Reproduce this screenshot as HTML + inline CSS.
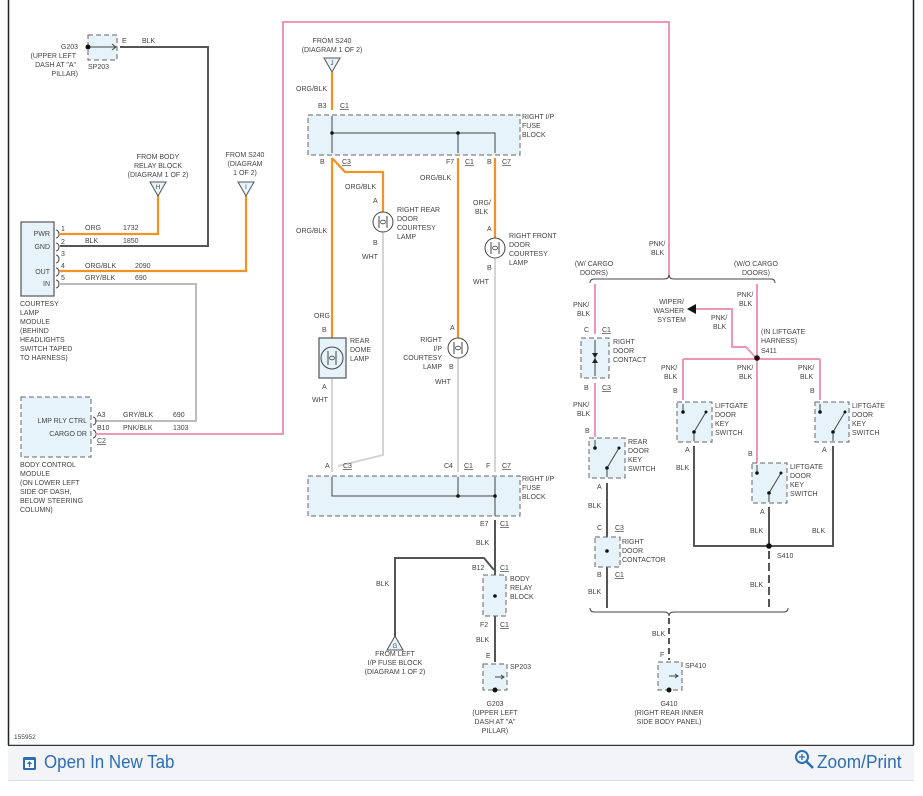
<!DOCTYPE html>
<html><head><meta charset="utf-8">
<style>
html,body{margin:0;padding:0;background:#fff;width:923px;height:796px;overflow:hidden}
#wrap{position:absolute;left:0;top:0;width:923px;height:796px}
svg{position:absolute;left:0;top:0}
text{font-family:"Liberation Sans",sans-serif;font-size:7px;fill:#444}
.m{text-anchor:middle}.r{text-anchor:end}
.box{fill:#e6f3fa;stroke:#666;stroke-width:1;stroke-dasharray:5 3}
.sbox{fill:#e6f3fa;stroke:#555;stroke-width:1.2}
.org{stroke:#f39224;stroke-width:2.2;fill:none}
.blk{stroke:#555;stroke-width:2;fill:none}
.gry{stroke:#bbb;stroke-width:2;fill:none}
.wht{stroke:#d4d4d4;stroke-width:2;fill:none}
.pnk{stroke:#ec98b4;stroke-width:2;fill:none}
.thin{stroke:#444;stroke-width:1;fill:none}
.dot{fill:#111}
.ftr{position:absolute;left:8px;top:746px;width:906px;height:34px;background:#f2f4f8;border-bottom:1px solid #dde}
.ftr span{position:absolute;top:6px;font-family:"Liberation Sans Narrow","Liberation Sans",sans-serif;font-size:18px;color:#2d6db5;transform-origin:0 0;white-space:nowrap}
</style></head><body><div id="wrap">
<svg width="923" height="796" viewBox="0 0 923 796">
<line x1="8.5" y1="0" x2="8.5" y2="745" stroke="#222" stroke-width="1.5"/>
<line x1="913.5" y1="0" x2="913.5" y2="745" stroke="#222" stroke-width="1.5"/>
<line x1="8" y1="745.5" x2="914" y2="745.5" stroke="#333" stroke-width="1.5"/>

<rect class="box" x="88" y="35" width="29" height="25"/>
<line class="thin" x1="88" y1="47" x2="116" y2="47"/><path class="thin" d="M112 44 L116 47 L112 50"/>
<circle class="dot" cx="88" cy="47" r="2.5"/>
<text x="122" y="43">E</text><text x="142" y="43">BLK</text>
<text class="r" x="78" y="49">G203</text>
<text class="r" x="76" y="58">(UPPER LEFT</text>
<text class="r" x="76" y="67">DASH AT "A"</text>
<text class="r" x="78" y="76">PILLAR)</text>
<text x="88" y="69">SP203</text>
<path class="blk" d="M120 47 H208 V246 H60"/>

<rect class="sbox" x="21" y="222" width="33" height="74"/>
<text class="r" x="50" y="236">PWR</text><text class="r" x="50" y="249">GND</text>
<text class="r" x="50" y="274">OUT</text><text class="r" x="50" y="286">IN</text>
<g class="thin"><path d="M56 230 a3 4 0 0 1 0 8"/><path d="M56 243 a3 4 0 0 1 0 8"/><path d="M56 255 a3 4 0 0 1 0 8"/><path d="M56 268 a3 4 0 0 1 0 8"/><path d="M56 280 a3 4 0 0 1 0 8"/></g>
<text x="61" y="231">1</text><text x="61" y="244">2</text><text x="61" y="256">3</text><text x="61" y="268">4</text><text x="61" y="280">5</text>
<path class="org" d="M59 234 H158 V195"/>
<text x="85" y="230">ORG</text><text x="123" y="230">1732</text>
<text x="85" y="243">BLK</text><text x="123" y="243">1850</text>
<polygon points="150,182 166,182 158,196" fill="#e6f3fa" stroke="#555"/><text class="m" x="158" y="189" style="font-size:6px">H</text>
<text class="m" x="158" y="159">FROM BODY</text><text class="m" x="158" y="168">RELAY BLOCK</text><text class="m" x="158" y="177">(DIAGRAM 1 OF 2)</text>
<path class="org" d="M59 271 H246 V196"/>
<polygon points="238,182 254,182 246,196" fill="#e6f3fa" stroke="#555"/><text class="m" x="246" y="189" style="font-size:6px">I</text>
<text class="m" x="245" y="157">FROM S240</text><text class="m" x="245" y="166">(DIAGRAM</text><text class="m" x="245" y="175">1 OF 2)</text>
<text x="85" y="268">ORG/BLK</text><text x="135" y="268">2090</text>
<path class="gry" d="M59 284 H196 V421 H95"/>
<text x="85" y="280">GRY/BLK</text><text x="135" y="280">690</text>
<text x="20" y="306">COURTESY</text><text x="20" y="315">LAMP</text><text x="20" y="324">MODULE</text><text x="20" y="333">(BEHIND</text><text x="20" y="342">HEADLIGHTS</text><text x="20" y="351">SWITCH TAPED</text><text x="20" y="360">TO HARNESS)</text>

<rect class="box" x="21" y="397" width="70" height="60"/>
<text class="r" x="87" y="423">LMP RLY CTRL</text><text class="r" x="87" y="436">CARGO DR</text>
<g class="thin"><path d="M93 417 a3 4 0 0 1 0 8"/><path d="M93 430 a3 4 0 0 1 0 8"/></g>
<text x="97" y="417">A3</text><text x="97" y="430">B10</text><text x="97" y="443" text-decoration="underline">C2</text>
<text x="123" y="417">GRY/BLK</text><text x="173" y="417">690</text>
<text x="123" y="430">PNK/BLK</text><text x="173" y="430">1303</text>
<path class="pnk" d="M95 434 H283 V22 H669 V278"/>
<text x="20" y="467">BODY CONTROL</text><text x="20" y="476">MODULE</text><text x="20" y="485">(ON LOWER LEFT</text><text x="20" y="494">SIDE OF DASH,</text><text x="20" y="503">BELOW STEERING</text><text x="20" y="512">COLUMN)</text>
<text x="14" y="739" style="font-size:6.5px">155952</text>

<text class="m" x="332" y="43">FROM S240</text><text class="m" x="332" y="52">(DIAGRAM 1 OF 2)</text>
<polygon points="324,58 340,58 332,72" fill="#e6f3fa" stroke="#555"/><text class="m" x="332" y="65" style="font-size:6px">J</text>
<text x="296" y="91">ORG/BLK</text>
<path class="org" d="M332 72 V110"/>
<text x="318" y="108">B3</text><text x="340" y="108" text-decoration="underline">C1</text>
<rect class="box" x="308" y="115" width="212" height="40"/>
<path class="thin" d="M332 116 V153 M332 133 H495 V153 M458 133 V153"/><circle class="dot" cx="332" cy="133" r="1.8"/><circle class="dot" cx="458" cy="133" r="1.8"/>
<text x="522" y="119">RIGHT I/P</text><text x="522" y="128">FUSE</text><text x="522" y="137">BLOCK</text>
<text x="320" y="164">B</text><text x="342" y="164" text-decoration="underline">C3</text>
<text x="446" y="164">F7</text><text x="465" y="164" text-decoration="underline">C1</text>
<text x="487" y="164">B</text><text x="502" y="164" text-decoration="underline">C7</text>
<path class="org" d="M332 158 V338"/>
<path class="org" d="M332 158 L345 172 H383 V212"/>
<text x="296" y="233">ORG/BLK</text>
<text x="345" y="189">ORG/BLK</text>
<circle cx="383" cy="222" r="10" fill="none" stroke="#444"/><path class="thin" d="M379 216 V228 M387 216 V228" stroke-width=".6"/><ellipse cx="383" cy="222" rx="2.5" ry="1.8" fill="none" stroke="#444" stroke-width=".8"/>
<text x="373" y="203">A</text><text x="373" y="245">B</text><text x="362" y="259">WHT</text>
<text x="397" y="212">RIGHT REAR</text><text x="397" y="221">DOOR</text><text x="397" y="230">COURTESY</text><text x="397" y="239">LAMP</text>
<text x="314" y="318">ORG</text><text x="322" y="332">B</text>
<rect class="sbox" x="319" y="338" width="27" height="40"/>
<circle cx="332" cy="358" r="11" fill="none" stroke="#444"/><path class="thin" d="M328 351 V365 M336 351 V365" stroke-width=".6"/><ellipse cx="332" cy="358" rx="2.5" ry="1.8" fill="none" stroke="#444" stroke-width=".8"/>
<text x="350" y="343">REAR</text><text x="350" y="352">DOME</text><text x="350" y="361">LAMP</text>
<text x="322" y="389">A</text><text x="312" y="402">WHT</text>
<path class="org" d="M458 158 V338"/>
<text x="420" y="180">ORG/BLK</text>
<circle cx="458" cy="348" r="10" fill="none" stroke="#444"/><path class="thin" d="M454 342 V354 M462 342 V354" stroke-width=".6"/><ellipse cx="458" cy="348" rx="2.5" ry="1.8" fill="none" stroke="#444" stroke-width=".8"/>
<text x="450" y="330">A</text>
<text class="r" x="442" y="342">RIGHT</text><text class="r" x="442" y="351">I/P</text><text class="r" x="442" y="360">COURTESY</text><text class="r" x="442" y="369">LAMP</text><text x="449" y="369">B</text>
<text x="435" y="384">WHT</text>
<path class="org" d="M495 158 V238"/>
<text x="473" y="205">ORG/</text><text x="475" y="214">BLK</text><text x="487" y="231">A</text>
<circle cx="495" cy="248" r="10" fill="none" stroke="#444"/><path class="thin" d="M491 242 V254 M499 242 V254" stroke-width=".6"/><ellipse cx="495" cy="248" rx="2.5" ry="1.8" fill="none" stroke="#444" stroke-width=".8"/>
<text x="509" y="238">RIGHT FRONT</text><text x="509" y="247">DOOR</text><text x="509" y="256">COURTESY</text><text x="509" y="265">LAMP</text>
<text x="487" y="270">B</text><text x="473" y="284">WHT</text>
<path class="wht" d="M332 379 V472 M383 233 V455 L338 466 M458 359 V472 M495 259 V472"/>
<text x="325" y="468">A</text><text x="343" y="468" text-decoration="underline">C3</text>
<text x="444" y="468">C4</text><text x="464" y="468" text-decoration="underline">C1</text>
<text x="486" y="468">F</text><text x="502" y="468" text-decoration="underline">C7</text>
<rect class="box" x="308" y="476" width="212" height="40"/>
<path class="thin" d="M332 477 V496 H495 M458 477 V496 M495 477 V516"/><circle class="dot" cx="458" cy="496" r="1.8"/><circle class="dot" cx="495" cy="496" r="1.8"/>
<text x="522" y="481">RIGHT I/P</text><text x="522" y="490">FUSE</text><text x="522" y="499">BLOCK</text>
<text x="480" y="526">E7</text><text x="500" y="526" text-decoration="underline">C1</text>
<path class="blk" d="M495 520 V662"/>
<text x="476" y="545">BLK</text>
<path class="blk" d="M395 637 V558 H484 L494 570"/>
<text x="376" y="586">BLK</text>
<polygon points="387,650 403,650 395,636" fill="#e6f3fa" stroke="#555"/><text class="m" x="395" y="648" style="font-size:6px">G</text>
<text class="m" x="395" y="656">FROM LEFT</text><text class="m" x="395" y="665">I/P FUSE BLOCK</text><text class="m" x="395" y="674">(DIAGRAM 1 OF 2)</text>
<text x="472" y="570">B12</text><text x="500" y="570" text-decoration="underline">C1</text>
<rect class="box" x="483" y="575" width="23" height="41"/><circle class="dot" cx="495" cy="596" r="1.8"/>
<text x="510" y="581">BODY</text><text x="510" y="590">RELAY</text><text x="510" y="599">BLOCK</text>
<text x="480" y="627">F2</text><text x="500" y="627" text-decoration="underline">C1</text>
<text x="476" y="642">BLK</text><text x="486" y="658">E</text>
<rect class="box" x="483" y="664" width="24" height="26"/><path class="thin" d="M495 677 H504 M501 675 L504 677 L501 679"/>
<circle class="dot" cx="495" cy="690" r="2.5"/>
<text x="510" y="669">SP203</text>
<text class="m" x="495" y="706">G203</text><text class="m" x="495" y="715">(UPPER LEFT</text><text class="m" x="495" y="724">DASH AT "A"</text><text class="m" x="495" y="733">PILLAR)</text>

<text x="649" y="246">PNK/</text><text x="651" y="255">BLK</text>
<path class="thin" d="M590 283 q0 -4 4 -4 H664 q5 0 5 -4 q0 4 5 4 H771 q4 0 4 4" stroke="#666"/>
<text class="m" x="594" y="266">(W/ CARGO</text><text class="m" x="594" y="275">DOORS)</text>
<text class="m" x="756" y="266">(W/O CARGO</text><text class="m" x="756" y="275">DOORS)</text>
<path class="pnk" d="M595 284 V334 M595 383 V437"/>
<text x="573" y="307">PNK/</text><text x="577" y="316">BLK</text>
<text x="584" y="332">C</text><text x="602" y="332" text-decoration="underline">C1</text>
<rect class="box" x="581" y="338" width="28" height="40"/><path class="thin" d="M595 340 V376"/><polygon points="592,353 598,353 595,358 598,363 592,363 595,358" fill="#222"/>
<text x="613" y="344">RIGHT</text><text x="613" y="353">DOOR</text><text x="613" y="362">CONTACT</text>
<text x="584" y="390">B</text><text x="602" y="390" text-decoration="underline">C3</text>
<text x="573" y="407">PNK/</text><text x="577" y="416">BLK</text><text x="585" y="433">B</text>
<rect class="box" x="589" y="438" width="36" height="40"/>
<g class="thin"><path d="M595 440 V448"/><path d="M607 470 V477"/><path d="M607 468 L619 448"/></g><circle class="dot" cx="595" cy="448" r="1.8"/><circle class="dot" cx="607" cy="468" r="1.8"/><circle class="dot" cx="619" cy="448" r="1.5"/>
<text x="628" y="444">REAR</text><text x="628" y="453">DOOR</text><text x="628" y="462">KEY</text><text x="628" y="471">SWITCH</text>
<text x="597" y="489">A</text>
<path class="blk" d="M607 483 V608"/>
<text x="588" y="508">BLK</text>
<text x="597" y="530">C</text><text x="615" y="530" text-decoration="underline">C3</text>
<rect class="box" x="595" y="537" width="25" height="30"/><circle class="dot" cx="607" cy="551" r="1.8"/>
<text x="622" y="544">RIGHT</text><text x="622" y="553">DOOR</text><text x="622" y="562">CONTACTOR</text>
<text x="597" y="577">B</text><text x="615" y="577" text-decoration="underline">C1</text>
<text x="588" y="594">BLK</text>
<path class="thin" d="M590 608 q0 4 4 4 H664 q5 0 5 4 q0 -4 5 -4 H784 q4 0 4 -4" stroke="#666"/>
<path class="blk" d="M669 618 V660" stroke-dasharray="6 4"/>
<text x="652" y="636">BLK</text><text x="660" y="657">F</text>
<rect class="box" x="658" y="662" width="24" height="28"/><path class="thin" d="M669 676 H678 M675 674 L678 676 L675 678"/><circle class="dot" cx="669" cy="690" r="2.5"/>
<text x="685" y="668">SP410</text>
<text class="m" x="669" y="706">G410</text><text class="m" x="669" y="715">(RIGHT REAR INNER</text><text class="m" x="669" y="724">SIDE BODY PANEL)</text>

<path class="pnk" d="M757 284 V463 M683 359 H820 M683 359 V400 M820 359 V400 M757 359 L746 347 H732 V309 H696"/>
<polygon points="696,304 696,314 687,309" fill="#111"/>
<text class="r" x="684" y="304">WIPER/</text><text class="r" x="684" y="313">WASHER</text><text class="r" x="686" y="322">SYSTEM</text>
<text x="711" y="320">PNK/</text><text x="713" y="329">BLK</text>
<text x="737" y="297">PNK/</text><text x="739" y="306">BLK</text>
<text x="761" y="334">(IN LIFTGATE</text><text x="761" y="343">HARNESS)</text><text x="761" y="353">S411</text>
<circle class="dot" cx="757" cy="358" r="2.8"/>
<text x="661" y="370">PNK/</text><text x="664" y="379">BLK</text>
<text x="737" y="370">PNK/</text><text x="739" y="379">BLK</text>
<text x="798" y="370">PNK/</text><text x="800" y="379">BLK</text>
<text x="673" y="393">B</text><text x="810" y="393">B</text><text x="748" y="456">B</text>
<rect class="box" x="677" y="402" width="35" height="40"/>
<g class="thin"><path d="M683 404 V412"/><path d="M694 434 V441"/><path d="M694 432 L706 412"/></g><circle class="dot" cx="683" cy="412" r="1.8"/><circle class="dot" cx="694" cy="432" r="1.8"/><circle class="dot" cx="706" cy="412" r="1.5"/>
<text x="715" y="408">LIFTGATE</text><text x="715" y="417">DOOR</text><text x="715" y="426">KEY</text><text x="715" y="435">SWITCH</text>
<text x="685" y="452">A</text><text x="676" y="470">BLK</text>
<rect class="box" x="815" y="402" width="34" height="40"/>
<g class="thin"><path d="M820 404 V412"/><path d="M833 434 V441"/><path d="M833 432 L845 412"/></g><circle class="dot" cx="820" cy="412" r="1.8"/><circle class="dot" cx="833" cy="432" r="1.8"/><circle class="dot" cx="845" cy="412" r="1.5"/>
<text x="852" y="408">LIFTGATE</text><text x="852" y="417">DOOR</text><text x="852" y="426">KEY</text><text x="852" y="435">SWITCH</text>
<text x="822" y="452">A</text><text x="812" y="533">BLK</text>
<rect class="box" x="752" y="463" width="35" height="40"/>
<g class="thin"><path d="M757 465 V473"/><path d="M769 495 V502"/><path d="M769 493 L781 473"/></g><circle class="dot" cx="757" cy="473" r="1.8"/><circle class="dot" cx="769" cy="493" r="1.8"/><circle class="dot" cx="781" cy="473" r="1.5"/>
<text x="790" y="469">LIFTGATE</text><text x="790" y="478">DOOR</text><text x="790" y="487">KEY</text><text x="790" y="496">SWITCH</text>
<text x="760" y="514">A</text><text x="750" y="533">BLK</text>
<path class="blk" d="M694 446 V546 H833 V446 M769 507 V546"/>
<path class="blk" d="M769 551 V607" stroke-dasharray="8 4"/>
<circle class="dot" cx="769" cy="546" r="2.8"/>
<text x="777" y="558">S410</text><text x="750" y="587">BLK</text>
</svg>
<div class="ftr">
  <svg width="16" height="16" style="left:14px;top:10px" viewBox="0 0 16 16"><rect x="1" y="1" width="13" height="13" rx="1.5" fill="#2d6db5"/><rect x="3" y="4" width="9" height="8" fill="#fff"/><path d="M7.5 11 V6 M5.5 8 L7.5 6 L9.5 8" stroke="#2d6db5" stroke-width="1.3" fill="none"/></svg>
  <span style="left:36px;transform:scaleX(0.94)">Open In New Tab</span>
  <svg width="22" height="22" style="left:786px;top:3px" viewBox="0 0 22 22"><circle cx="8" cy="8" r="6" fill="none" stroke="#2d6db5" stroke-width="2"/><path d="M12.5 12.5 L19 19" stroke="#2d6db5" stroke-width="2.5"/><path d="M8 5 V11 M5 8 H11" stroke="#2d6db5" stroke-width="1.3"/></svg>
  <span style="left:809px;transform:scaleX(0.96)">Zoom/Print</span>
</div>
</div></body></html>
